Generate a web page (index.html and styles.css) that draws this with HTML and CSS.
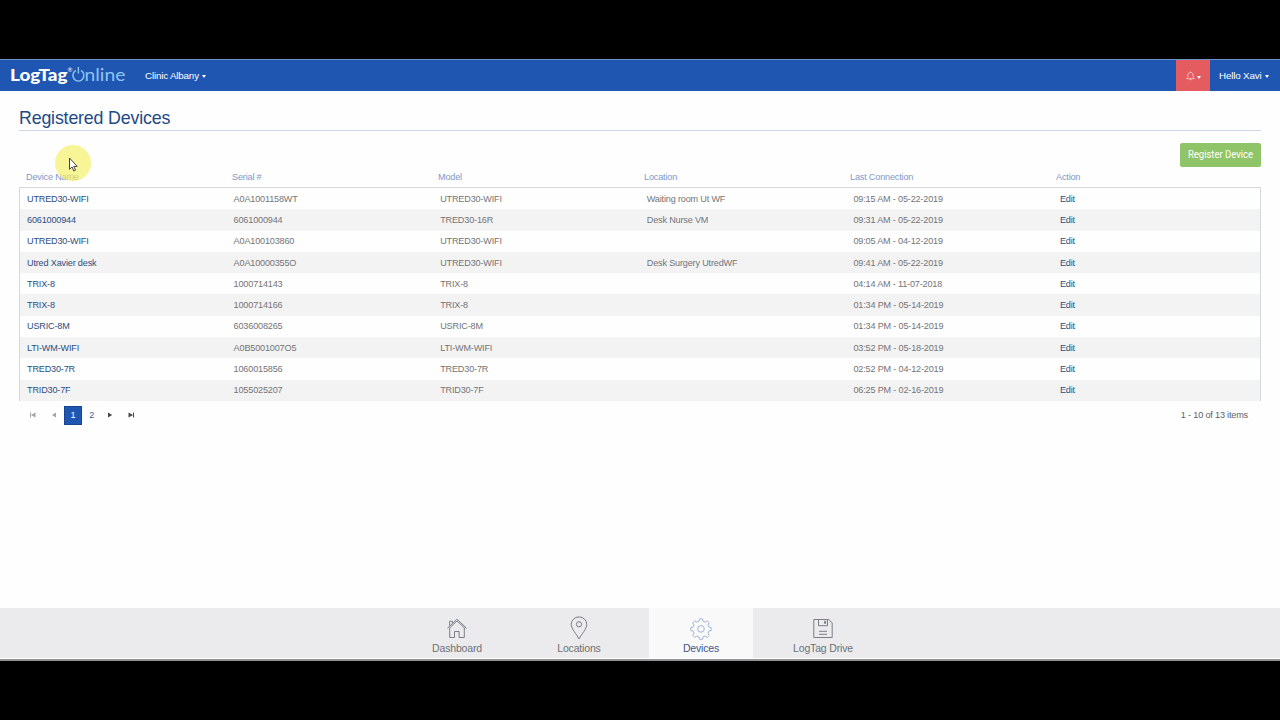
FILE: index.html
```html
<!DOCTYPE html>
<html lang="en">
<head>
  <meta charset="UTF-8">
  <meta name="viewport" content="width=device-width, initial-scale=1.0">
  <title>LogTag Online - Registered Devices</title>
  <link rel="stylesheet" href="styles.css">
</head>
<body>
  <div class="app">
    <header class="navbar">
      <svg class="logo" width="118" height="26" viewBox="0 0 118 26">
        <text class="logo-bold" x="1" y="19" textLength="57.5" lengthAdjust="spacingAndGlyphs">LogTag</text>
        <text class="logo-reg" x="58.5" y="9.5">®</text>
        <path class="logo-power" d="M66.9 8.300a5.500 5.700 0 1 0 5 0M69.400 5v6.500"/>
        <text class="logo-light" x="75.500" y="19" textLength="41" lengthAdjust="spacingAndGlyphs">nline</text>
      </svg>
      <div class="clinic">Clinic Albany <span class="caret"></span></div>
      <div class="alerts">
        <svg width="9" height="10" viewBox="0 0 10 11">
          <path d="M.8 8.5C2.3 7.3 2 5.8 2.1 4.4 2.3 2.6 3.3 1.5 5 1.5s2.7 1.1 2.9 2.9c.1 1.4-.2 2.9 1.3 4.1zM4 8.9c.2 1.2 1.8 1.2 2 0M5 .6v.9"/>
        </svg>
        <span class="caret"></span>
      </div>
      <div class="user">Hello Xavi <span class="caret"></span></div>
    </header>

    <main class="content">
      <h1>Registered Devices</h1>
      <div class="toolbar"><button class="register-btn"><span>Register Device</span></button></div>

      <div class="grid-row grid-head">
        <span>Device Name</span><span>Serial #</span><span>Model</span><span>Location</span><span>Last Connection</span><span>Action</span>
      </div>
      <div class="grid-body">
        <div class="grid-row"><a>UTRED30-WIFI</a><span>A0A1001158WT</span><span>UTRED30-WIFI</span><span>Waiting room Ut WF</span><span>09:15 AM - 05-22-2019</span><a>Edit</a></div>
        <div class="grid-row"><a>6061000944</a><span>6061000944</span><span>TRED30-16R</span><span>Desk Nurse VM</span><span>09:31 AM - 05-22-2019</span><a>Edit</a></div>
        <div class="grid-row"><a>UTRED30-WIFI</a><span>A0A100103860</span><span>UTRED30-WIFI</span><span></span><span>09:05 AM - 04-12-2019</span><a>Edit</a></div>
        <div class="grid-row"><a>Utred Xavier desk</a><span>A0A10000355O</span><span>UTRED30-WIFI</span><span>Desk Surgery UtredWF</span><span>09:41 AM - 05-22-2019</span><a>Edit</a></div>
        <div class="grid-row"><a>TRIX-8</a><span>1000714143</span><span>TRIX-8</span><span></span><span>04:14 AM - 11-07-2018</span><a>Edit</a></div>
        <div class="grid-row"><a>TRIX-8</a><span>1000714166</span><span>TRIX-8</span><span></span><span>01:34 PM - 05-14-2019</span><a>Edit</a></div>
        <div class="grid-row"><a>USRIC-8M</a><span>6036008265</span><span>USRIC-8M</span><span></span><span>01:34 PM - 05-14-2019</span><a>Edit</a></div>
        <div class="grid-row"><a>LTI-WM-WIFI</a><span>A0B5001007O5</span><span>LTI-WM-WIFI</span><span></span><span>03:52 PM - 05-18-2019</span><a>Edit</a></div>
        <div class="grid-row"><a>TRED30-7R</a><span>1060015856</span><span>TRED30-7R</span><span></span><span>02:52 PM - 04-12-2019</span><a>Edit</a></div>
        <div class="grid-row"><a>TRID30-7F</a><span>1055025207</span><span>TRID30-7F</span><span></span><span>06:25 PM - 02-16-2019</span><a>Edit</a></div>
      </div>

      <div class="pager">
        <span class="page disabled"><svg width="6" height="6" viewBox="0 0 6 6"><path d="M0 .5h1v5H0zM5.5.5v5L1 3z"/></svg></span>
        <span class="page disabled"><svg width="6" height="6" viewBox="0 0 6 6"><path d="M5 .5v5L1 3z"/></svg></span>
        <span class="page current">1</span>
        <span class="page">2</span>
        <span class="page"><svg width="6" height="6" viewBox="0 0 6 6"><path d="M1 .5v5L5.2 3z"/></svg></span>
        <span class="page last"><svg width="6" height="6" viewBox="0 0 6 6"><path d="M.5.5v5L5 3zM5 .5h1v5H5z"/></svg></span>
        <span class="page-info">1 - 10 of 13 items</span>
      </div>
    </main>

    <nav class="bottom-nav">
      <div class="nav-item">
        <svg width="22" height="24" viewBox="0 0 22 24">
          <path d="M1.5 12.2 11 3.2l9.5 9M3 12.5l8-7.5 8 7.5M3.7 12.2v9.3h4.8v-6h4.6v6h5.2v-9.3M3.6 9.5V5.2h2.8v1.9"/>
        </svg>
        <span>Dashboard</span>
      </div>
      <div class="nav-item">
        <svg width="22" height="24" viewBox="0 0 22 24">
          <path d="M11 23C8.4 18 3.2 12.8 3.2 8.3a7.8 7.4 0 0 1 15.6 0C18.8 12.8 13.6 18 11 23z"/>
          <circle cx="11" cy="8.3" r="2.6"/>
        </svg>
        <span>Locations</span>
      </div>
      <div class="nav-item active">
        <svg width="22" height="24" viewBox="0 0 22 24">
          <path d="M9.5 2.900h3l.5 2.300 2.200.9 2-1.300 2.100 2.100-1.300 2 .9 2.200 2.300.5v3l-2.300.5-.9 2.200 1.300 2-2.100 2.100-2-1.300-2.200.9-.5 2.300h-3l-.5-2.300-2.200-.9-2 1.300-2.100-2.100 1.300-2-.9-2.200-2.300-.5v-3l2.300-.5.9-2.200-1.300-2 2.100-2.100 2 1.300 2.200-.9z"/>
          <circle cx="11" cy="12.900" r="3.300"/>
        </svg>
        <span>Devices</span>
      </div>
      <div class="nav-item">
        <svg width="22" height="24" viewBox="0 0 22 24">
          <path d="M1.8 3.5h14.9l3.5 3.300v14.700H1.800zM6.500 3.500v6.200h9V3.500M12.600 5.200h1v2.300h-1zM7 15.300h8M7 18.300h8"/>
        </svg>
        <span>LogTag Drive</span>
      </div>
    </nav>
  </div>

  <div class="pointer">
    <svg width="38" height="38" viewBox="0 0 38 38">
      <circle cx="19" cy="19" r="18"/>
      <path d="M15.500 14v11.300l2.600-2.300 1.700 4 1.700-.8-1.700-3.800h3.400z"/>
    </svg>
  </div>
</body>
</html>
```
FILE: styles.css
```css
* {
  box-sizing: border-box;
  margin: 0;
  padding: 0;
}

body {
  background-color: #000;
  font-family: "Liberation Sans", Arial, sans-serif;
  font-size: 9.1px;
  letter-spacing: -.17px;
  color: #747476;
  height: 720px;
  padding: 59px 0;
  overflow: hidden;
}

.app {
  display: flex;
  flex-direction: column;
  height: 602px;
  background-color: #fefefe;
  border-bottom: 2px solid #929395;
}

/* top bar */
.navbar {
  display: flex;
  align-items: center;
  height: 32px;
  padding-bottom: 1px;
  background-color: #1e56b1;
  border-top: 1px solid #6f94cc;
  color: #fff;
  font-size: 9.8px;
}

.logo {
  margin-left: 9px;
  letter-spacing: 0;
}

.logo-bold,
.logo-light,
.logo-reg {
  font-family: Lato, sans-serif;
  fill: #fff;
}

.logo-bold {
  font-size: 17px;
  font-weight: 900;
}

.logo-reg {
  font-size: 6px;
}

.logo-light {
  font-size: 18px;
  font-weight: 400;
  fill: #8fc5f5;
}

.logo-power {
  fill: none;
  stroke: #8fc5f5;
  stroke-width: 1.4;
}

.clinic {
  margin-left: 18px;
}

.caret {
  display: inline-block;
  margin-left: 1px;
  border: 2.5px solid transparent;
  border-top: 3px solid #fff;
  border-bottom: 0;
  vertical-align: 1px;
}

.alerts {
  display: flex;
  align-items: center;
  justify-content: center;
  width: 34px;
  height: 31px;
  margin: 0 0 -1px auto;
  background-color: #e45c60;
}

.alerts svg {
  fill: none;
  stroke: #fbdcdd;
  stroke-width: .8;
}

.alerts .caret {
  margin: 3px 0 0 2px;
}

.user {
  width: 70px;
  padding-left: 9px;
  white-space: nowrap;
}

/* page */
.content {
  flex: 1;
  padding: 0 19px;
}

h1 {
  height: 40px;
  padding-top: 17px;
  border-bottom: 1px solid #cbd9e8;
  font-size: 17.8px;
  font-weight: normal;
  line-height: 20px;
  color: #234984;
}

.toolbar {
  display: flex;
  justify-content: flex-end;
  padding-top: 12px;
}

.register-btn {
  width: 81px;
  height: 24px;
  padding-bottom: 1px;
  border: 0;
  border-radius: 2px;
  background-color: #8fc468;
  color: #fff;
  font-family: Roboto, sans-serif;
  font-size: 11px;
}

.register-btn span {
  display: block;
  margin: 0 -10px;
  transform: scaleX(.86);
}

.grid-row {
  display: grid;
  grid-template-columns: repeat(5, 206.6px) 1fr;
  align-items: center;
  height: 21.3px;
  padding-left: 7px;
}

.grid-head {
  grid-template-columns: repeat(5, 206px) 1fr;
  height: 20px;
  color: #7f98c8;
}

.grid-body {
  border: 1px solid #d5d8dd;
  border-bottom: 0;
}

.grid-body .grid-row:nth-child(even) {
  background-color: #f3f3f4;
}

.grid-body a {
  color: #2c4d80;
}

/* pager */
.pager {
  display: flex;
  align-items: center;
  height: 29px;
  padding: 0 13px 0 5px;
}

.page {
  display: flex;
  align-items: center;
  justify-content: center;
  width: 18.6px;
  height: 19px;
  color: #44618d;
  fill: #47484c;
}

.page.disabled {
  fill: #a4a4a8;
}

.page.disabled:first-child {
  margin-right: 2.5px;
}

.page.current {
  background-color: #1e56b1;
  border: 1px solid #174592;
  color: #fff;
}

.page.last {
  margin-left: 2px;
}

.page-info {
  margin-left: auto;
  color: #606063;
}

/* bottom navigation */
.bottom-nav {
  display: flex;
  justify-content: center;
  gap: 18px;
  height: 51px;
  background-color: #ebebed;
  border-bottom: 1px solid #fff;
}

.nav-item {
  display: flex;
  flex-direction: column;
  align-items: center;
  width: 104px;
  padding-top: 8px;
  font-size: 10.5px;
  color: #6e7176;
}

.nav-item svg {
  margin-bottom: 2px;
  fill: none;
  stroke: #7a7e85;
  stroke-width: 1;
}

.nav-item.active {
  background-color: #f9f9fa;
  color: #3d578c;
}

.nav-item.active svg {
  stroke: #a3b4d6;
}

/* mouse highlight */
.pointer {
  position: absolute;
  left: 54px;
  top: 144px;
}

.pointer circle {
  fill: #f3f05c;
  opacity: .65;
}

.pointer path {
  fill: #fff;
  stroke: #45454d;
  stroke-width: 1;
}
```
